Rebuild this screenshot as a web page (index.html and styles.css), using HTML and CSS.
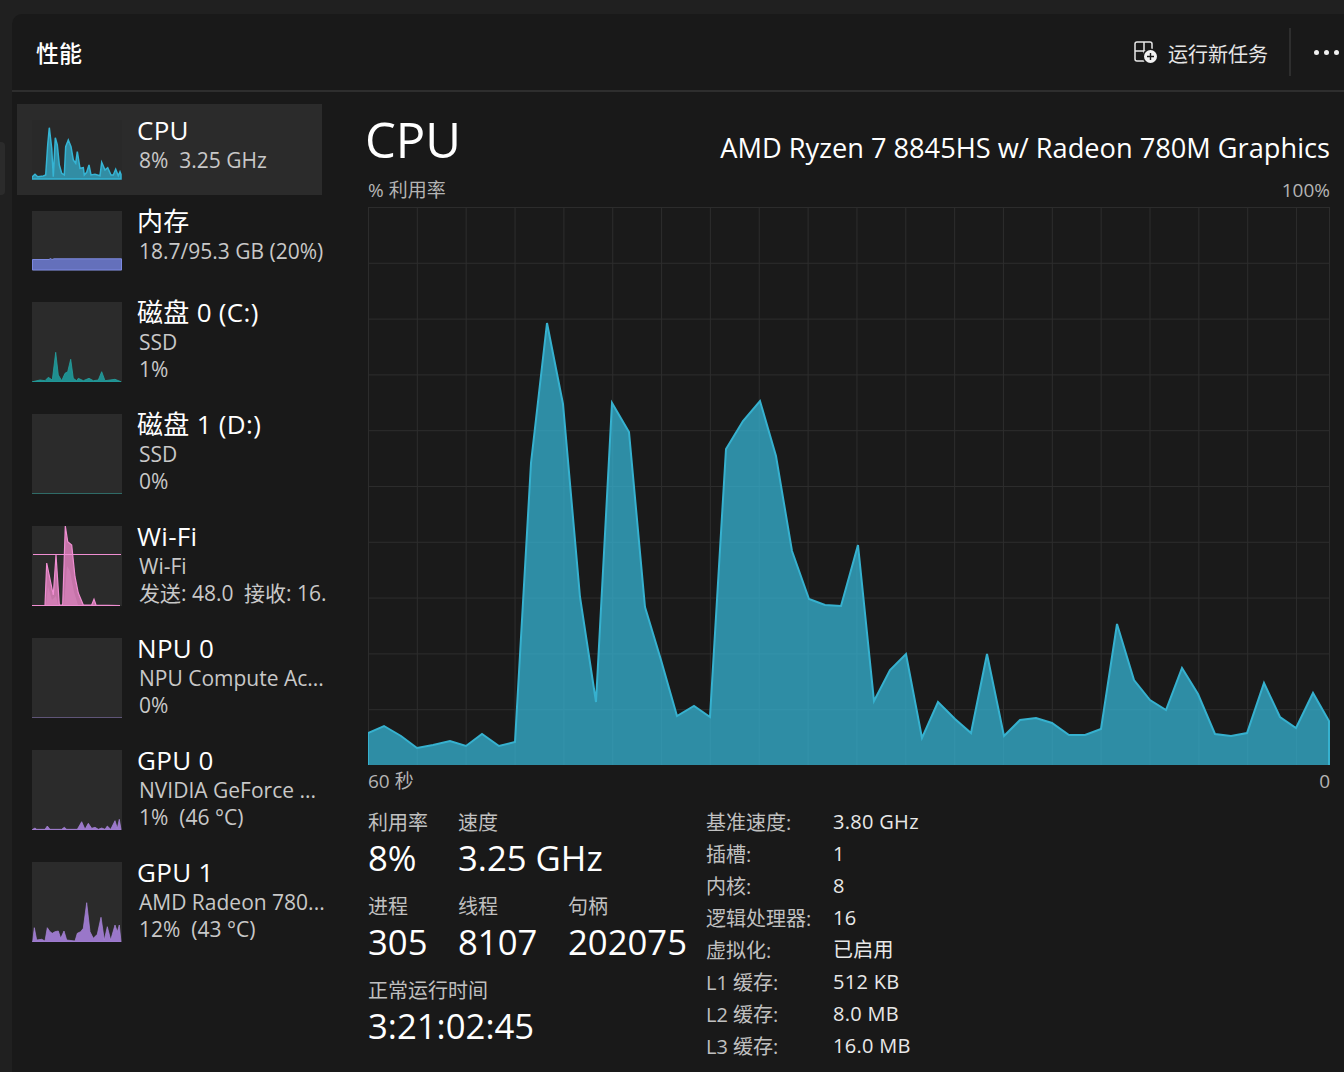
FILE: index.html
```html
<!DOCTYPE html>
<html lang="zh-CN">
<head>
    <meta charset="utf-8">
    <meta name="viewport" content="width=device-width, initial-scale=1.0">
    <title>性能</title>
    <link rel="stylesheet" href="styles.css">
</head>
<body>
    <div class="side-pill"></div>
    <div class="panel">
        <header class="top-bar">
            <h1 class="page-title">性能</h1>
            <div class="top-actions">
                <svg class="run-icon" viewBox="0 0 24 24" width="24" height="24">
                    <path d="M3 1h13a2 2 0 0 1 2 2v15a2 2 0 0 1-2 2H3a2 2 0 0 1-2-2V3a2 2 0 0 1 2-2zM10 1v19M1 10h17" fill="none" stroke="#e8e8e8" stroke-width="1.5"/>
                    <circle cx="16.5" cy="15.5" r="8" fill="#191919"/>
                    <circle cx="16.5" cy="15.5" r="6.5" fill="#f2f2f2"/>
                    <path d="M16.5 12v7M13 15.5h7" stroke="#191919" stroke-width="1.4"/>
                </svg>
                <span class="run-label">运行新任务</span>
                <span class="top-divider"></span>
                <span class="more-dots"><i></i><i></i><i></i></span>
            </div>
        </header>

        <div class="content">
            <nav class="sidebar">
                <div class="row row-short selected">
                    <svg class="thumb thumb-short" viewBox="0 0 90 60">
                        <polygon class="cpu-line" points="0,59 0.3,56.7 3,54.3 5.7,56.7 11.3,56 13.7,55 15.7,25 17.3,7.7 19.7,28.3 21.3,56.7 23.3,17.7 25.3,25 27.3,45 29.7,53.3 32.3,55 33.7,26.7 36.3,20 39,26.7 41.3,40 43.7,43.3 45.3,31.7 48,48.3 51.3,47.7 52.3,55 54.7,52.3 57,45 59,55 63,54.3 68,55.7 69.7,42.3 73,50 75.7,47.7 79,55 81.3,55 83.7,49.3 86.3,55.7 88,51.7 89,54.3 89,59"/>
                    </svg>
                    <div class="row-text">
                        <div class="row-title">CPU</div>
                        <div class="row-sub">8%&nbsp; 3.25 GHz</div>
                    </div>
                </div>
                <div class="row row-short">
                    <svg class="thumb thumb-short" viewBox="0 0 90 60">
                        <polygon class="mem-line" points="0.5,59 0.5,48.5 17,48.5 18.5,47.5 20,48.5 22,47.8 89.5,47.8 89.5,59"/>
                    </svg>
                    <div class="row-text">
                        <div class="row-title">内存</div>
                        <div class="row-sub">18.7/95.3 GB (20%)</div>
                    </div>
                </div>
                <div class="row">
                    <svg class="thumb" viewBox="0 0 90 80">
                        <polygon class="disk-line" points="0,80 0.7,79.7 8,78 13,78.7 16.3,75.3 20.3,78 23.7,50.3 26.3,73 29.7,78.7 33,71.3 35.7,69.7 38.7,57.3 41.3,76.3 44.7,78.7 46.3,76.3 51.3,78.7 57,76.3 61.3,78.7 66.3,78 69.7,69.7 73,78.7 83,77.3 89,79.7 89,80"/>
                    </svg>
                    <div class="row-text">
                        <div class="row-title">磁盘 0 (C:)</div>
                        <div class="row-sub">SSD</div>
                        <div class="row-sub">1%</div>
                    </div>
                </div>
                <div class="row">
                    <svg class="thumb" viewBox="0 0 90 80">
                        <line class="flat-disk" x1="0" y1="79.5" x2="90" y2="79.5"/>
                    </svg>
                    <div class="row-text">
                        <div class="row-title">磁盘 1 (D:)</div>
                        <div class="row-sub">SSD</div>
                        <div class="row-sub">0%</div>
                    </div>
                </div>
                <div class="row">
                    <svg class="thumb" viewBox="0 0 90 80">
                        <polygon class="wifi-line" points="0,79.5 13,79.5 14.7,37 21.3,69 24,29 27.3,79 30.7,79 33.3,0 35.7,15.7 39.7,19 43,50.7 46.3,67 51.3,79 59.7,79 62,73.3 64,79 88,79.5"/>
                        <polygon class="wifi-inner" points="14,79 16,60 20,74 24,70 26,79 32,79 35,40 38,45 42,66 46,79"/>
                        <line class="wifi-limit" x1="1" y1="28.5" x2="89" y2="28.5"/>
                    </svg>
                    <div class="row-text">
                        <div class="row-title">Wi-Fi</div>
                        <div class="row-sub">Wi-Fi</div>
                        <div class="row-sub">发送: 48.0&ensp;接收: 16.0 Mbps</div>
                    </div>
                </div>
                <div class="row">
                    <svg class="thumb" viewBox="0 0 90 80">
                        <line class="flat-npu" x1="0" y1="79.5" x2="90" y2="79.5"/>
                    </svg>
                    <div class="row-text">
                        <div class="row-title">NPU 0</div>
                        <div class="row-sub">NPU Compute Ac...</div>
                        <div class="row-sub">0%</div>
                    </div>
                </div>
                <div class="row">
                    <svg class="thumb" viewBox="0 0 90 80">
                        <polygon class="gpu-line" points="0,80 0.7,79.3 3,78 4.7,79.3 13,79.3 15.3,76 18,79.3 29.7,79.3 32.3,77.3 34.7,79.3 45.3,79.3 49.7,71.7 53,79.3 56.3,73.3 59.7,78.3 63,77.3 66.3,79.3 69.7,78 73,79.3 75.3,76 78.7,79.3 83,70.7 85.3,78.3 87.3,69.3 89,79.3 89,80"/>
                    </svg>
                    <div class="row-text">
                        <div class="row-title">GPU 0</div>
                        <div class="row-sub">NVIDIA GeForce ...</div>
                        <div class="row-sub">1%&nbsp; (46 °C)</div>
                    </div>
                </div>
                <div class="row">
                    <svg class="thumb" viewBox="0 0 90 80">
                        <polygon class="gpu-line" points="0,80 0.7,79.7 2.3,65.7 4.7,78 9.7,77.3 13,79 15.3,65.7 18,69.7 20.3,71.3 23,69.7 26.3,69 28.7,76.3 32,69 34.7,78 43,79 45.3,71.3 48.7,69.7 51.3,66.3 54.7,40.7 58,69.7 61.3,76.3 65.3,72.3 69,55.3 72.3,78 75.3,64.7 78.7,78 83,63 85.3,69.7 87.3,63 89,79.7 89,80"/>
                    </svg>
                    <div class="row-text">
                        <div class="row-title">GPU 1</div>
                        <div class="row-sub">AMD Radeon 780...</div>
                        <div class="row-sub">12%&nbsp; (43 °C)</div>
                    </div>
                </div>
            </nav>

            <main class="main">
                <div class="title-row">
                    <h2 class="cpu-title">CPU</h2>
                    <div class="cpu-model">AMD Ryzen 7 8845HS w/ Radeon 780M Graphics</div>
                </div>
                <div class="axis-row">
                    <span>% 利用率</span>
                    <span>100%</span>
                </div>
                <div class="chart">
                    <svg class="chart-svg" viewBox="368 207 962 558" width="962" height="558">
                        <polygon class="chart-area" points="368,766 368,733 384,726 401,736 417,748 433,745 450,741 466,746 482,734 499,746 515,742 531,463 547,323 563,404 580,597 596,702 612,403 629,432 645,607 661,660 677,716 694,706 710,717 726,449 743,421 760,401 776,456 792,551 809,599 825,605 841,606 858,545 874,701 890,670 906,654 922,738 938,702 955,719 971,733 987,654 1004,736 1020,720 1036,718 1052,723 1069,735 1085,735 1101,729 1117,624 1134,680 1150,700 1166,710 1182,668 1198,694 1215,734 1231,736 1247,733 1264,683 1280,717 1296,728 1313,693 1329,721 1329,766"/>
                    </svg>
                </div>
                <div class="axis-row axis-bottom">
                    <span>60 秒</span>
                    <span>0</span>
                </div>

                <div class="details">
                    <div class="stats">
                        <div class="stat-row">
                            <div class="stat stat-a"><div class="stat-label">利用率</div><div class="stat-value">8%</div></div>
                            <div class="stat stat-b"><div class="stat-label">速度</div><div class="stat-value">3.25 GHz</div></div>
                        </div>
                        <div class="stat-row">
                            <div class="stat stat-a"><div class="stat-label">进程</div><div class="stat-value">305</div></div>
                            <div class="stat stat-b"><div class="stat-label">线程</div><div class="stat-value">8107</div></div>
                            <div class="stat"><div class="stat-label">句柄</div><div class="stat-value">202075</div></div>
                        </div>
                        <div class="stat-row">
                            <div class="stat"><div class="stat-label">正常运行时间</div><div class="stat-value">3:21:02:45</div></div>
                        </div>
                    </div>
                    <dl class="specs">
                        <dt>基准速度:</dt><dd>3.80 GHz</dd>
                        <dt>插槽:</dt><dd>1</dd>
                        <dt>内核:</dt><dd>8</dd>
                        <dt>逻辑处理器:</dt><dd>16</dd>
                        <dt>虚拟化:</dt><dd>已启用</dd>
                        <dt>L1 缓存:</dt><dd>512 KB</dd>
                        <dt>L2 缓存:</dt><dd>8.0 MB</dd>
                        <dt>L3 缓存:</dt><dd>16.0 MB</dd>
                    </dl>
                </div>
            </main>
        </div>
    </div>
</body>
</html>
```

FILE: styles.css
```css
* {
    box-sizing: border-box;
}

body {
    margin: 0;
    height: 1072px;
    overflow: hidden;
    background-color: #202020;
    color: #ffffff;
    font-family: "Open Sans", "Noto Sans CJK SC", sans-serif;
    padding: 14px 0 0 12px;
}

.side-pill {
    position: absolute;
    left: 0;
    top: 142px;
    width: 5px;
    height: 53px;
    background-color: #2b2b2b;
    border-radius: 0 4px 4px 0;
}

.panel {
    height: 1058px;
    background-color: #191919;
    border-top-left-radius: 10px;
}

.top-bar {
    height: 78px;
    padding: 0 5px 0 24px;
    display: flex;
    align-items: center;
    justify-content: space-between;
    border-bottom: 2px solid #2e2e2e;
}

.page-title {
    margin: 2px 0 0;
    font-size: 23px;
    font-weight: 500;
    line-height: 30px;
}

.top-actions {
    display: flex;
    align-items: center;
    height: 48px;
}

.run-icon {
    margin: 2px 10px 0 0;
}

.run-label {
    font-size: 20px;
    line-height: 26px;
    color: #e6e6e6;
    margin-top: 6px;
}

.top-divider {
    width: 2px;
    height: 48px;
    margin: 0 23px 0 21px;
    background-color: #2e2e2e;
}

.more-dots {
    display: flex;
    gap: 5px;
}

.more-dots i {
    width: 5px;
    height: 5px;
    border-radius: 50%;
    background-color: #f0f0f0;
}

.content {
    display: flex;
}

.sidebar {
    width: 305px;
    margin: 12px 0 0 5px;
    display: flex;
    flex-direction: column;
    flex: none;
}

.row {
    display: flex;
    align-items: flex-start;
    gap: 15px;
    height: 112px;
    padding: 16px 0 0 15px;
}

.row-short {
    height: 91px;
}

.selected {
    background-color: #2b2b2b;
}

.thumb {
    flex: none;
    width: 90px;
    height: 80px;
    background-color: #2b2b2b;
    display: block;
}

.thumb-short {
    height: 60px;
}

.selected .thumb {
    background-color: #292929;
}

.row-text {
    flex: none;
    width: 190px;
    margin-top: -7px;
    overflow: hidden;
    white-space: nowrap;
}

.row-title {
    font-size: 26px;
    line-height: 34px;
    letter-spacing: 0.3px;
}

.row-sub {
    font-size: 21px;
    line-height: 27px;
    color: #c8c8c8;
    margin-left: 2px;
}

.cpu-line { fill: rgba(54, 180, 212, 0.72); stroke: #35b4d4; stroke-width: 1.5; }
.mem-line { fill: #6470bb; stroke: #7c89e0; stroke-width: 1; }
.disk-line { fill: #1f8f90; stroke: #25a19f; stroke-width: 0.8; }
.wifi-line { fill: #c574a8; stroke: #f08ed2; stroke-width: 1.2; }
.wifi-inner { fill: #e98fcb; opacity: 0.35; }
.wifi-limit { stroke: #f08ed2; stroke-width: 1; }
.gpu-line { fill: #9a77c9; stroke: #a785d8; stroke-width: 0.7; }
.flat-disk { stroke: #2f6b67; stroke-width: 1; }
.flat-npu { stroke: #5f5578; stroke-width: 1; }

.main {
    width: 962px;
    margin-left: 46px;
    flex: none;
}

.title-row {
    height: 84px;
    padding-top: 19px;
    display: flex;
    align-items: baseline;
    justify-content: space-between;
}

.cpu-title {
    margin: 0 0 0 -3px;
    font-size: 49px;
    font-weight: 400;
    line-height: 56px;
}

.cpu-model {
    font-size: 27.2px;
    line-height: 36px;
}

.axis-row {
    display: flex;
    justify-content: space-between;
    font-size: 19px;
    line-height: 24px;
    color: #b4b4b4;
    height: 31px;
    padding-top: 2px;
}

.axis-bottom {
    height: 44px;
    padding-top: 4px;
}

.chart {
    width: 962px;
    height: 558px;
    background-color: #1a1a1a;
    background-image:
        linear-gradient(to right, #2c2c2c 1px, transparent 1px),
        linear-gradient(to bottom, #2c2c2c 1px, transparent 1px);
    background-size: 48.85px 55.8px;
    border-right: 1px solid #2c2c2c;
}

.chart-svg {
    display: block;
    overflow: hidden;
}

.chart-area {
    fill: rgba(54, 180, 212, 0.75);
    stroke: #36b1cf;
    stroke-width: 2;
}

.details {
    display: flex;
}

.stats {
    width: 338px;
    flex: none;
}

.stat-row {
    display: flex;
    height: 84px;
}

.stat-a {
    width: 90px;
}

.stat-b {
    width: 110px;
    white-space: nowrap;
}

.stat-label {
    font-size: 20px;
    line-height: 28px;
    color: #c0c0c0;
}

.stat-value {
    font-size: 34.7px;
    line-height: 44px;
    margin-top: -1px;
}

.specs {
    margin: 0;
    display: grid;
    grid-template-columns: 127px auto;
    grid-auto-rows: 32px;
    font-size: 20px;
    line-height: 28px;
    justify-content: start;
}

.specs dt {
    color: #c0c0c0;
}

.specs dd {
    margin: -1px 0 0;
    color: #e8e8e8;
    letter-spacing: 0.3px;
}
```
